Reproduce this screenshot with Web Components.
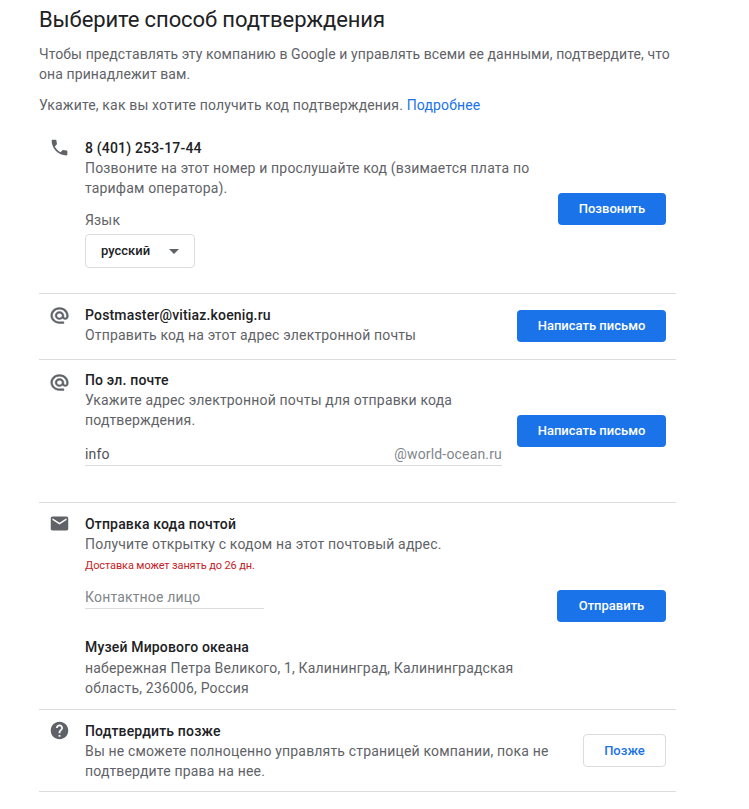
<!DOCTYPE html>
<html lang="ru"><head><meta charset="utf-8"><title>Подтверждение</title>
<style>
html,body{margin:0;background:#fff}
body{font:14px/20px Roboto,"Liberation Sans",sans-serif;color:#5f6368}
a{color:#1a73e8}
</style></head><body>
<verify-page>
  <span slot="title">Выберите способ подтверждения</span>
  <p style="letter-spacing:.09px">Чтобы представлять эту компанию в Google и управлять всеми ее данными, подтвердите, что она принадлежит вам.</p>
  <p style="letter-spacing:.16px">Укажите, как вы хотите получить код подтверждения. <a>Подробнее</a></p>
  <verify-row slot="rows" icon="phone" style="--top:12px;--bottom:25px;--ab:2px">
    <span slot="title">8 (401) 253-17-44</span>
    Позвоните на этот номер и прослушайте код (взимается плата по тарифам оператора).
    <lang-select slot="extra"></lang-select>
    <v-btn slot="action" style="--w:108px">Позвонить</v-btn>
  </verify-row>
  <verify-row slot="rows" icon="at" style="--bottom:14px;--ab:2px;--ih:19px;--imt:1px;--is:.6px">
    <span slot="title">Postmaster@vitiaz.koenig.ru</span>
    Отправить код на этот адрес электронной почты
    <v-btn slot="action" style="--w:149px">Написать письмо</v-btn>
  </verify-row>
  <verify-row slot="rows" icon="at" style="--top:10px;--bottom:36px;--ih:19px;--imt:3px;--is:.6px">
    <span slot="title">По эл. почте</span>
    Укажите адрес электронной почты для отправки кода подтверждения.
    <v-field slot="extra" suffix="@world-ocean.ru" style="--w:417px;--mt:14px;--color:#4d5156">info</v-field>
    <v-btn slot="action" style="--w:149px">Написать письмо</v-btn>
  </verify-row>
  <verify-row slot="rows" icon="mail">
    <span slot="title">Отправка кода почтой</span>
    Получите открытку с кодом на этот почтовый адрес.
    <post-details slot="extra"></post-details>
    <v-btn slot="action" style="--w:109px">Отправить</v-btn>
  </verify-row>
  <verify-row slot="rows" icon="help" style="--bottom:10px">
    <span slot="title">Подтвердить позже</span>
    Вы не сможете полноценно управлять страницей компании, пока не подтвердите права на нее.
    <v-btn slot="action" outline style="--w:83px">Позже</v-btn>
  </verify-row>
</verify-page>
<script>
const ICONS={
phone:'<path d="M6.62 10.79c1.44 2.83 3.76 5.14 6.59 6.59l2.2-2.2c.27-.27.67-.36 1.02-.24 1.12.37 2.33.57 3.57.57.55 0 1 .45 1 1V20c0 .55-.45 1-1 1-9.39 0-17-7.61-17-17 0-.55.45-1 1-1h3.5c.55 0 1 .45 1 1 0 1.25.2 2.45.57 3.57.11.35.03.74-.25 1.02l-2.2 2.2z"/>',
at:'<path d="M12 2C6.48 2 2 6.48 2 12s4.48 10 10 10h5v-2h-5c-4.34 0-8-3.66-8-8s3.66-8 8-8 8 3.66 8 8v1.43c0 .79-.71 1.57-1.5 1.57s-1.5-.78-1.5-1.57V12c0-2.76-2.24-5-5-5s-5 2.24-5 5 2.24 5 5 5c1.38 0 2.64-.56 3.54-1.47.65.89 1.77 1.47 2.96 1.47 1.97 0 3.5-1.6 3.5-3.57V12c0-5.52-4.48-10-10-10zm0 13c-1.66 0-3-1.34-3-3s1.34-3 3-3 3 1.34 3 3-1.34 3-3 3z"/>',
mail:'<path d="M20 4H4c-1.1 0-1.99.9-1.99 2L2 18c0 1.1.9 2 2 2h16c1.1 0 2-.9 2-2V6c0-1.1-.9-2-2-2zm0 4l-8 5-8-5V6l8 5 8-5v2z"/>',
help:'<path d="M12 2C6.48 2 2 6.48 2 12s4.48 10 10 10 10-4.48 10-10S17.52 2 12 2zm1 17h-2v-2h2v2zm2.07-7.75l-.9.92C13.45 12.9 13 13.5 13 15h-2v-.5c0-1.1.45-2.1 1.17-2.83l1.24-1.26c.37-.36.59-.86.59-1.41 0-1.1-.9-2-2-2s-2 .9-2 2H8c0-2.21 1.79-4 4-4s4 1.79 4 4c0 .88-.36 1.68-.93 2.25z"/>'};
function def(name,html){customElements.define(name,class extends HTMLElement{
  connectedCallback(){if(this.shadowRoot)return;const r=this.attachShadow({mode:'open'});r.innerHTML=html(this);}
});}
def('verify-page',()=>`<style>
:host{display:block;width:637px;padding:0 0 0 39px}
h1{margin:0;font:400 22px/28px Roboto,sans-serif;letter-spacing:-.1px;color:#202124;padding-top:6px}
.intro{padding-top:10px}
::slotted(p){margin:0 0 11px;font-size:14px;line-height:20px}
.rows{margin-top:10px}
</style><h1><slot name="title"></slot></h1><div class="intro"><slot></slot></div><div class="rows"><slot name="rows"></slot></div>`);
def('verify-row',h=>`<style>
:host{display:flex;align-items:center;gap:8px;border-bottom:1px solid #dadce0;padding:0 10px 0 0;letter-spacing:.17px}
.left{flex:1;min-width:0;display:flex;padding:var(--top,11px) 0 var(--bottom,11px) 10px}
.icon{width:36px;flex:none}
svg{display:block;width:21px;height:var(--ih,21px);fill:#5f6368;stroke:#5f6368;stroke-width:var(--is,0);margin-top:var(--imt,-1px)}
.main{flex:1;min-width:0}
.title{color:#202124;font-weight:500}
.act{flex:none;display:flex;margin-bottom:var(--ab,0)}
</style><div class="left"><div class="icon"><svg viewBox="0 0 24 24" preserveAspectRatio="none">${ICONS[h.getAttribute('icon')]}</svg></div>
<div class="main"><div class="title"><slot name="title"></slot></div><slot></slot><slot name="extra"></slot></div></div>
<div class="act"><slot name="action"></slot></div>`);
def('v-btn',h=>`<style>
:host{display:block;letter-spacing:0}
div{box-sizing:border-box;width:var(--w);height:32px;border-radius:4px;display:flex;align-items:center;justify-content:center;font:500 13px/16px Roboto,sans-serif;${h.hasAttribute('outline')?'background:#fff;color:#1a73e8;border:1px solid #dadce0;height:33px':'background:#1a73e8;color:#fff'}}
</style><div><slot></slot></div>`);
def('lang-select',()=>`<style>
:host{display:block;margin-top:12px}
.label{margin-bottom:4px}
.box{box-sizing:border-box;width:110px;height:34px;border:1px solid #dadce0;border-radius:4px;display:flex;align-items:center;padding:0 15px;font:500 13px/16px Roboto,sans-serif;color:#202124;background:#fff;letter-spacing:0}
i{margin-left:auto;width:0;height:0;border:5px solid transparent;border-top-color:#5f6368;border-bottom:0}
</style><div class="label">Язык</div><div class="box"><span>русский</span><i></i></div>`);
def('v-field',h=>`<style>
:host{display:block;width:var(--w);margin-top:var(--mt,0)}
div{display:flex;justify-content:space-between;border-bottom:1px solid #dadce0;height:21px;color:var(--color,#5f6368)}
span{color:#80868b}
</style><div><slot></slot><span>${h.getAttribute('suffix')||''}</span></div>`);
def('post-details',()=>`<style>
:host{display:block}
.warn{color:#c5221f;font-size:11px;letter-spacing:-.12px;line-height:14px;margin-top:5px}
.name{color:#202124;font-weight:500;margin-bottom:1px}
</style><div class="warn">Доставка может занять до 26 дн.</div>
<v-field style="--w:179px;--mt:14px;margin-bottom:28px;--color:#80868b">Контактное лицо</v-field>
<div class="name">Музей Мирового океана</div>
<div>набережная Петра Великого, 1, Калининград, Калининградская область, 236006, Россия</div>`);
</script>
</body></html>
